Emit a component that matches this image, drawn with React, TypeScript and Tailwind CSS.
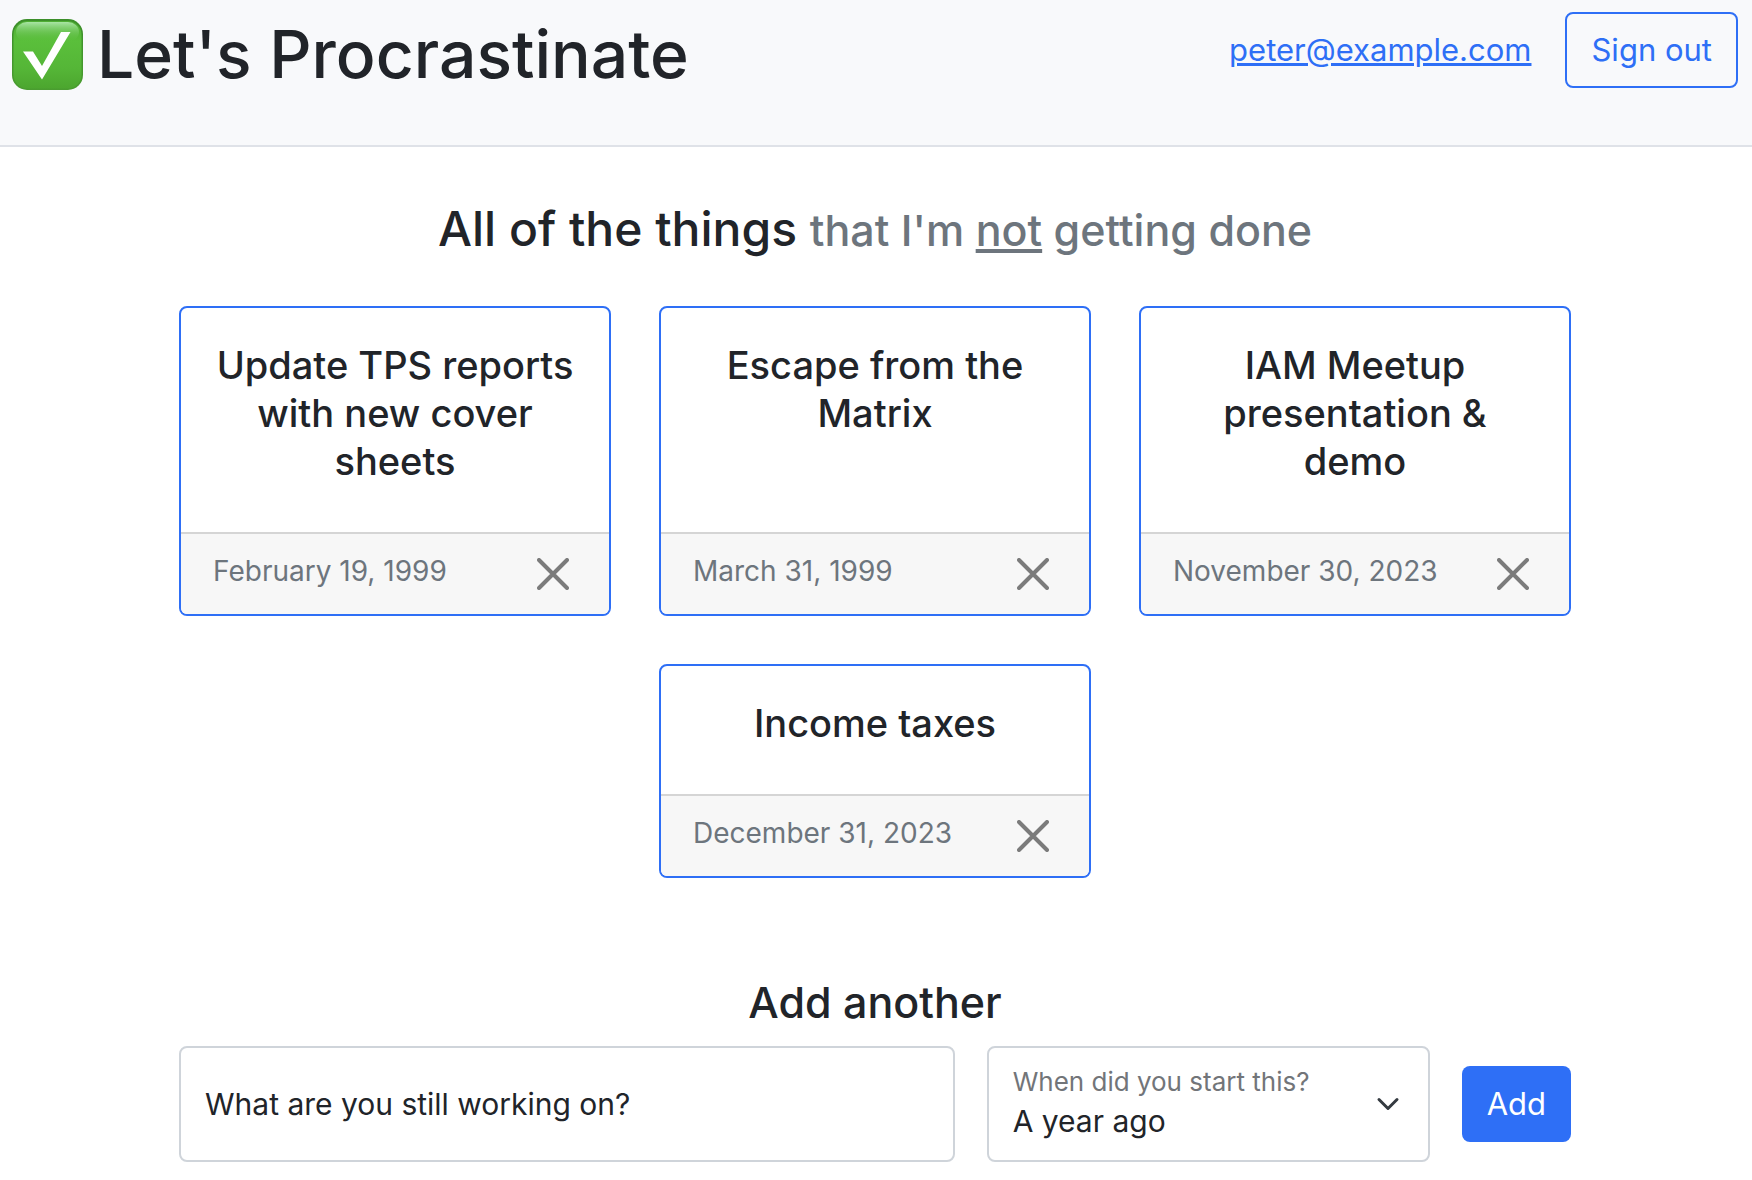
type Task = { title: string; started: string };

const tasks: Task[] = [
  { title: 'Update TPS reports with new cover sheets', started: 'February 19, 1999' },
  { title: 'Escape from the Matrix', started: 'March 31, 1999' },
  { title: 'IAM Meetup presentation & demo', started: 'November 30, 2023' },
  { title: 'Income taxes', started: 'December 31, 2023' },
];

function CheckLogo() {
  return (
    <svg className="size-[71px] shrink-0" viewBox="0 0 71 71" aria-hidden="true">
      <defs>
        <linearGradient id="face" x1="0" y1="0" x2="0" y2="1">
          <stop offset="0" stopColor="#4fae33" />
          <stop offset="0.3" stopColor="#5abf3b" />
          <stop offset="0.7" stopColor="#55b637" />
          <stop offset="1" stopColor="#4ca62f" />
        </linearGradient>
        <linearGradient id="gloss" x1="0" y1="0" x2="0" y2="1">
          <stop offset="0" stopColor="#a9e5a5" />
          <stop offset="1" stopColor="#5cc13d" stopOpacity="0" />
        </linearGradient>
        <linearGradient id="rim" x1="0" y1="0" x2="0" y2="1">
          <stop offset="0" stopColor="#3c8f2a" />
          <stop offset="1" stopColor="#4a9d30" />
        </linearGradient>
      </defs>
      <rect width="71" height="71" rx="15" fill="url(#rim)" />
      <rect x="1.5" y="2" width="68" height="67.5" rx="14" fill="url(#face)" />
      <rect x="4" y="3" width="63" height="20" rx="11" fill="url(#gloss)" />
      <path d="M11 32.5h10L30 47 49 13h9.500L30 60.500z" fill="#fff" />
    </svg>
  );
}

function TaskCard({ title, started }: Task) {
  return (
    <article className="flex w-[432px] flex-col overflow-hidden rounded-lg border-2 border-[#2e6ff6] bg-white">
      <div className="flex-1 px-8 pt-[33px] pb-[47px]">
        <h3 className="text-center text-[38px] leading-[48px] font-medium">{title}</h3>
      </div>
      <footer className="flex h-[82px] items-center justify-between border-t-2 border-[#d5d5d5] bg-[#f7f7f7] pr-10 pl-8">
        <time className="pb-1.5 text-[28px] leading-9 text-[#6d757d]">{started}</time>
        <button type="button" aria-label={`Remove ${title}`} className="text-[#7b7b7b]">
          <svg className="size-8" viewBox="0 0 32 32" fill="none" stroke="currentColor" strokeWidth="4" strokeLinecap="round">
            <path d="M2 2l28 28M30 2L2 30" />
          </svg>
        </button>
      </footer>
    </article>
  );
}

export default function App() {
  return (
    <div className="min-h-screen bg-white font-['Inter',sans-serif] text-[#212429]">
      <header className="flex h-[147px] items-start justify-between border-b-2 border-[#dfe2e8] bg-[#f8f9fb] pt-3 pr-3.5 pl-3">
        <div className="flex items-center gap-3.5">
          <CheckLogo />
          <h1 className="text-[66px] leading-[85px] font-medium">Let's Procrastinate</h1>
        </div>
        <div className="flex items-center gap-[34px]">
          <a href="#account" className="text-[31px] leading-[48px] text-[#2e6ff6] underline">
            peter@example.com
          </a>
          <button type="button" className="rounded-lg border-2 border-[#2e6ff6] px-6 py-3 text-[31px] leading-[48px] text-[#2e6ff6]">
            Sign out
          </button>
        </div>
      </header>

      <main className="mx-auto w-full max-w-[1394px] pt-[50px] pr-0.5">
        <h2 className="mb-[46px] text-center text-[48px] leading-[63px] font-medium">
          All of the things{' '}
          <small className="text-[43px] leading-none text-[#6d757d]">
            that I'm <u>not</u> getting done
          </small>
        </h2>

        <section className="flex flex-wrap justify-center gap-12">
          {tasks.map((task) => (
            <TaskCard key={task.title} {...task} />
          ))}
        </section>

        <form className="mt-24" onSubmit={(e) => e.preventDefault()}>
          <h2 className="mb-4 text-center text-[43px] leading-[56px] font-medium">Add another</h2>
          <div className="flex items-center gap-8">
            <div className="relative flex-1">
              <input id="task" type="text" className="block h-[116px] w-full rounded-lg border-2 border-[#cfd4da] px-6 text-[30px]" />
              <label htmlFor="task" className="pointer-events-none absolute inset-y-0 left-0 flex items-center pl-[26px] text-[30px]">
                What are you still working on?
              </label>
            </div>
            <div className="relative w-[443px]">
              <select id="started" className="block h-[116px] w-full appearance-none rounded-lg border-2 border-[#cfd4da] bg-white px-6 pt-[34px] text-[30px]">
                <option>A year ago</option>
              </select>
              <label htmlFor="started" className="pointer-events-none absolute top-4 left-0 pl-[26px] text-[26px] leading-10 text-[#727579]">
                When did you start this?
              </label>
              <svg className="pointer-events-none absolute inset-y-0 right-[30px] my-auto size-6" viewBox="0 0 16 16" fill="none" stroke="#343a40" strokeWidth="2" strokeLinecap="round" strokeLinejoin="round">
                <path d="m2 5 6 6 6-6" />
              </svg>
            </div>
            <button type="submit" className="rounded-lg bg-[#2e6ff6] px-[25px] py-3.5 text-[31px] leading-[48px] text-white">
              Add
            </button>
          </div>
        </form>
      </main>
    </div>
  );
}
